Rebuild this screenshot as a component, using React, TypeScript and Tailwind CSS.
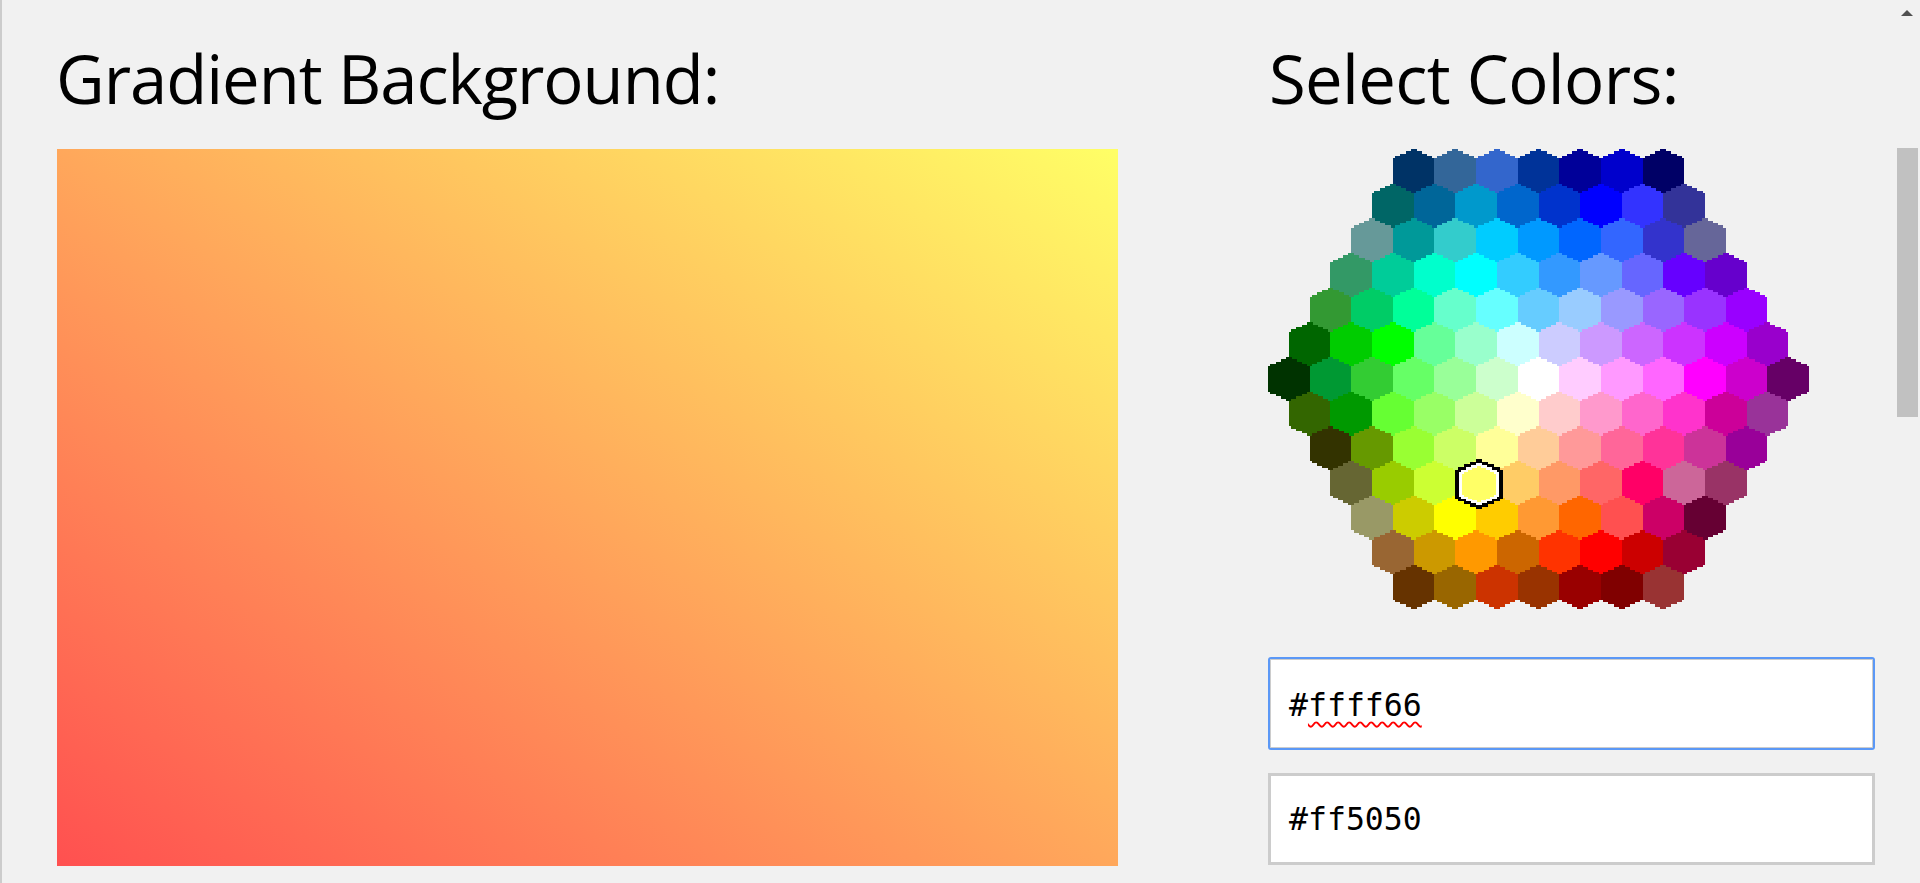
const rows: string[][] = [
  ["003366","336699","3366CC","003399","000099","0000CC","000066"],
  ["006666","006699","0099CC","0066CC","0033CC","0000FF","3333FF","333399"],
  ["669999","009999","33CCCC","00CCFF","0099FF","0066FF","3366FF","3333CC","666699"],
  ["339966","00CC99","00FFCC","00FFFF","33CCFF","3399FF","6699FF","6666FF","6600FF","6600CC"],
  ["339933","00CC66","00FF99","66FFCC","66FFFF","66CCFF","99CCFF","9999FF","9966FF","9933FF","9900FF"],
  ["006600","00CC00","00FF00","66FF99","99FFCC","CCFFFF","CCCCFF","CC99FF","CC66FF","CC33FF","CC00FF","9900CC"],
  ["003300","009933","33CC33","66FF66","99FF99","CCFFCC","FFFFFF","FFCCFF","FF99FF","FF66FF","FF00FF","CC00CC","660066"],
  ["336600","009900","66FF33","99FF66","CCFF99","FFFFCC","FFCCCC","FF99CC","FF66CC","FF33CC","CC0099","993399"],
  ["333300","669900","99FF33","CCFF66","FFFF99","FFCC99","FF9999","FF6699","FF3399","CC3399","990099"],
  ["666633","99CC00","CCFF33","FFFF66","FFCC66","FF9966","FF6666","FF0066","CC6699","993366"],
  ["999966","CCCC00","FFFF00","FFCC00","FF9933","FF6600","FF5050","CC0066","660033"],
  ["996633","CC9900","FF9900","CC6600","FF3300","FF0000","CC0000","990033"],
  ["663300","996600","CC3300","993300","990000","800000","993333"],
];

// half widths of one hexagon, one entry per pixel row of the stepped source shape
const widths = [1.25, 3.5, 5.75, 8, 9, 9, 9, 9, 9, 9, 9, 9, 9, 9, 9, 8, 5.75, 3.5, 1.25];

function hexPath(x: number, y: number, scale = 1) {
  const cx = x + 9;
  const cy = y + 9.5;
  const right: string[] = [];
  const left: string[] = [];
  widths.forEach((w, i) => {
    const top = cy + (i - 9.5) * scale;
    const bottom = top + scale;
    right.push(`L${cx + w * scale} ${top}L${cx + w * scale} ${bottom}`);
    left.unshift(`L${cx - w * scale} ${bottom}L${cx - w * scale} ${top}`);
  });
  return `M${cx} ${cy - 9.5 * scale}${right.join("")}${left.join("")}Z`;
}

function ColorMap() {
  const selX = 82.3;
  const selY = 135.5;
  return (
    <svg
      width="541"
      height="460"
      viewBox="0 0 234 199"
      shapeRendering="crispEdges"
      className="block blur-[0.6px]"
    >
      {rows.map((row, r) =>
        row.map((color, c) => (
          <path key={color} d={hexPath(Math.abs(r - 6) * 9 + c * 18, r * 15)} fill={`#${color}`} />
        ))
      )}
      <path d={hexPath(selX, selY, 1.15)} fill="#000000" />
      <path d={hexPath(selX, selY, 0.97)} fill="#ffffff" />
      <path d={hexPath(selX, selY, 0.83)} fill="#FFFF66" />
    </svg>
  );
}

export default function App() {
  return (
    <div className="relative h-[883px] overflow-hidden border-l-2 border-[#cccccc] bg-[#f1f1f1] pl-[55px] text-black">
      <div className="flex gap-[150px]">
        <div className="w-[1061px]">
          <h1 className="-ml-[1px] h-[149px] pt-[34px] font-['Open_Sans',sans-serif] text-[67px] leading-[88px] font-normal tracking-[-1.03px]">
            Gradient Background:
          </h1>
          <div className="h-[717px] bg-[linear-gradient(to_top_right,#ff5050,#ffff66)]" />
        </div>
        <div className="w-[607px]">
          <h1 className="h-[149px] pt-[34px] pl-[1px] font-['Open_Sans',sans-serif] text-[67px] leading-[88px] font-normal tracking-[-0.66px]">
            Select Colors:
          </h1>
          <ColorMap />
          <div className="mt-[48px] flex h-[93px] items-center rounded-[3px] border-2 border-[#5b98f6] bg-white pt-[5px] pl-[19px] font-['DejaVu_Sans_Mono',monospace] text-[31.5px] shadow-[inset_0_0_0_1px_#cccccc]">
            <span>#</span>
            <span className="underline decoration-[#ff0000] decoration-wavy decoration-[1.5px] underline-offset-[5px]">ffff66</span>
          </div>
          <div className="mt-[23px] flex h-[92px] items-center border-[3px] border-[#cccccc] bg-white pt-[2px] pl-[18px] font-['DejaVu_Sans_Mono',monospace] text-[31.5px]">
            #ff5050
          </div>
        </div>
      </div>
      <div className="absolute top-[148px] right-[2px] h-[269px] w-[21px] bg-[#c1c1c1]" />
      <div className="absolute top-[10px] right-[7px] h-0 w-0 border-x-[6px] border-b-[6px] border-x-transparent border-b-[#505050]" />
    </div>
  );
}
